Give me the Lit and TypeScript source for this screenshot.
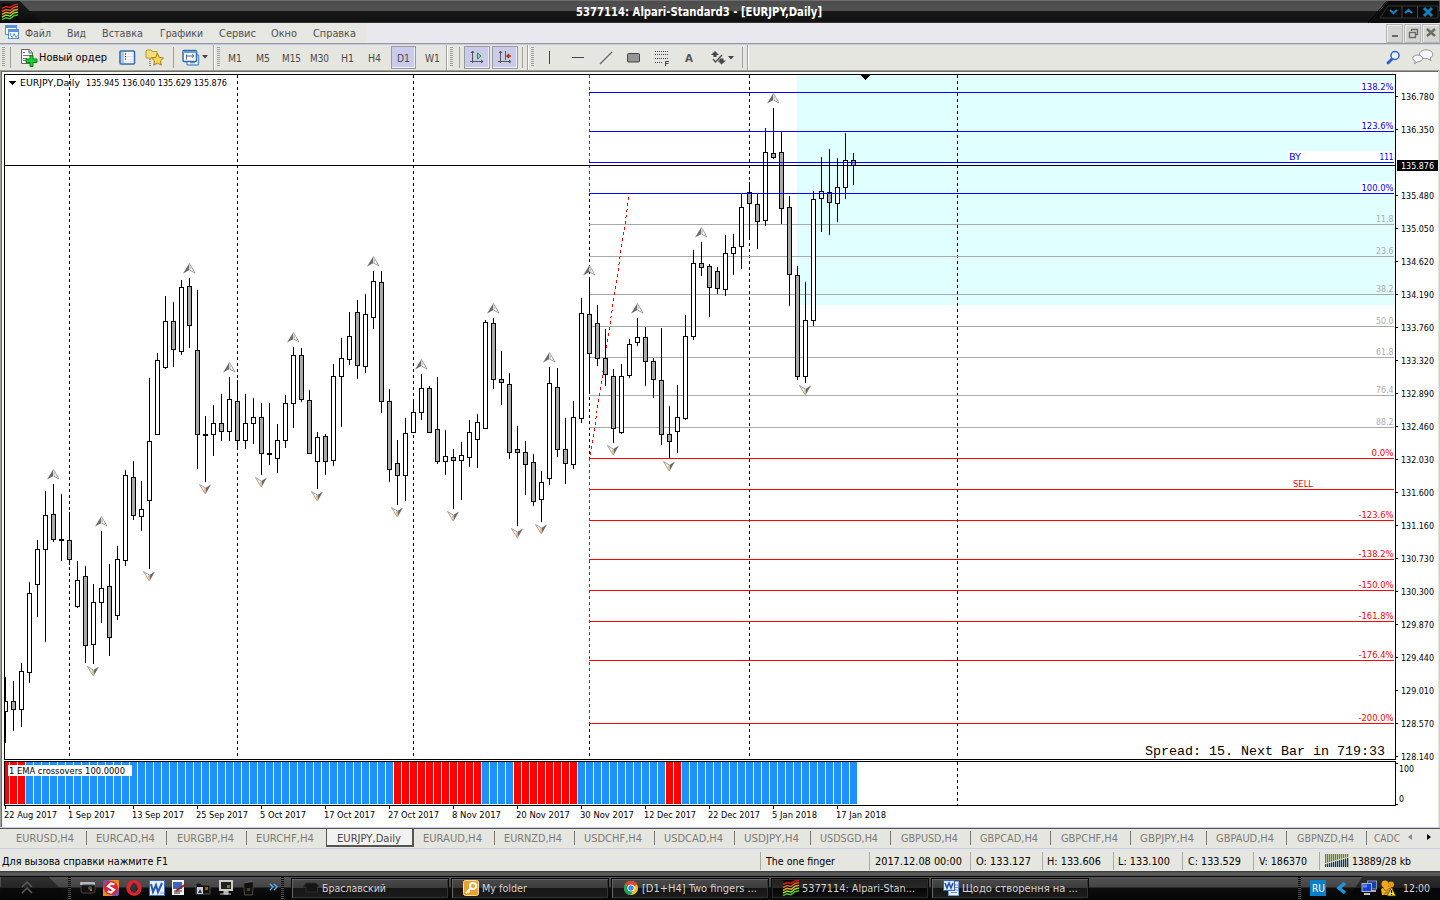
import { LitElement, html, svg, css, nothing } from 'lit';
import { customElement } from 'lit/decorators.js';

// One string per bar: high, low, body top, body bottom; g = bearish, w = bullish
const BARS = `677,743,701,712,w 681,731,701,710,g 663,727,671,710,w 582,683,593,673,w 540,617,549,585,w
491,642,515,550,w 484,542,514,540,g 494,561,539,541,g 512,565,540,560,g 561,608,580,607,w
566,663,576,646,g 584,664,602,645,w 531,623,588,603,w 564,656,586,638,g 546,620,559,616,w
470,566,475,561,w 461,520,477,516,g 481,531,509,517,w 378,569,441,501,w 353,435,360,435,w
296,369,321,368,w 302,367,321,350,g 280,355,287,352,w 278,348,286,326,g 290,469,350,435,g
416,482,434,436,g 405,456,423,435,w 394,441,423,432,g 377,441,399,432,w 380,447,401,441,g
394,449,423,441,w 398,444,417,424,w 403,475,417,454,g 403,465,453,455,g 424,473,440,459,w
395,448,403,441,w 347,428,355,404,w 348,402,355,400,g 390,454,400,454,g 432,489,437,462,w
434,475,436,462,g 364,466,376,461,w 338,427,358,377,w 312,365,336,360,w 300,379,312,366,g
294,373,314,367,w 271,329,281,318,w 271,413,282,402,g 389,482,401,470,g 440,505,463,476,g
418,501,433,476,w 399,433,412,433,w 374,420,388,413,w 386,433,388,433,g 377,464,429,462,g
430,475,456,462,w 449,509,457,461,g 442,500,455,461,w 420,467,432,458,w 414,468,422,440,w
320,429,322,429,w 318,389,323,380,g 351,405,379,383,g 373,459,384,453,g 426,526,449,453,g
441,495,452,465,g 454,506,462,502,g 471,522,482,500,w 367,485,383,479,w 368,457,387,450,g
418,484,449,464,g 401,469,417,465,w 298,423,313,419,w 278,393,314,354,g 305,366,323,359,g
329,386,358,375,g 369,443,376,429,g 364,434,376,433,w 339,378,344,376,w 318,346,337,343,w
327,386,337,362,g 358,398,361,380,g 328,445,380,435,g 406,458,434,442,g 385,453,417,432,w
315,420,336,419,w 250,340,263,337,w 242,276,263,268,g 264,317,266,288,g 267,294,271,289,g
235,296,253,290,w 234,275,247,254,w 194,269,207,247,w 182,239,192,204,g 194,249,204,222,g
128,226,152,221,w 108,159,153,158,g 132,224,152,209,g 196,306,207,275,g 266,380,275,377,g
282,383,320,377,w 191,326,199,321,w 157,232,191,199,w 149,235,192,203,g 158,222,187,204,w
133,199,160,188,w 153,185,160,166,g`.split(/\s+/).map(s => {
  const p = s.split(',');
  return { h: +p[0], l: +p[1], t: +p[2], b: +p[3], bear: p[4] === 'g' };
});

const UPS = [[53,474],[101,521],[189,268],[229,367],[293,337],[373,261],[421,364],[493,308],[549,357],[589,270],[637,308],[701,232],[773,98]];
const DOWNS = [[93,671],[149,576],[205,489],[261,482],[317,496],[397,512],[453,516],[517,533],[541,529],[613,450],[669,466],[805,390]];
const LEVELS: [number, string, string][] = [
  [92,'blue','138.2%'],[131,'blue','123.6%'],[162,'blue','111'],[193,'blue','100.0%'],
  [224,'gray','11.8'],[256,'gray','23.6'],[294,'gray','38.2'],[326,'gray','50.0'],[357,'gray','61.8'],[395,'gray','76.4'],[427,'gray','88.2'],
  [458,'red','0.0%'],[489,'red',''],[520,'red','-123.6%'],[559,'red','-138.2%'],[590,'red','-150.0%'],[621,'red','-161.8%'],[660,'red','-176.4%'],[723,'red','-200.0%'],
];
const LABEL_W: Record<string, number> = { '111': 14, '0.0%': 22 };
const PRICES = ['136.780','136.350','','135.480','135.050','134.620','134.190','133.760','133.320','132.890','132.460','132.030','131.600','131.160','130.730','130.300','129.870','129.440','129.010','128.570','128.140'];
const DATES: [string, number][] = [['22 Aug 2017',53],['1 Sep 2017',47],['13 Sep 2017',52],['25 Sep 2017',52],['5 Oct 2017',46],['17 Oct 2017',51],['27 Oct 2017',51],['8 Nov 2017',49],['20 Nov 2017',54],['30 Nov 2017',54],['12 Dec 2017',52],['22 Dec 2017',52],['5 Jan 2018',45],['17 Jan 2018',50]];

const label = (s: string, w: number, cls = '') =>
  html`<svg class="t ${cls}" width=${w} height="16"><text x="0" y="12" textLength=${w} lengthAdjust="spacingAndGlyphs">${s}</text></svg>`;

type Item = [number, number, unknown, string?];
// Lays items out in a flex row; each item is [start, width, content, class]
const row = (items: Item[]) => {
  let end = 0;
  return items.map(([x, w, c, cls]) => {
    const m = x - end;
    end = x + w;
    return html`<div class="cell ${cls ?? ''}" style="width:${w}px;margin-left:${m}px">${c}</div>`;
  });
};

const platformLogo = html`<svg width="16" height="16" viewBox="0 0 16 16"><rect width="16" height="16" fill="#060606"/>
<g fill="none" stroke-width="1.500"><path d="M0 4.500l4-2 4 1 4-2.500 4-.5" stroke="#d3201c"/><path d="M0 7.500l4-2 4 1 4-3 4-1" stroke="#e0602a"/><path d="M0 10.300l4-2 4 1 4-3 4-1" stroke="#e0b028"/><path d="M0 13l4-2 4 1 4-3 4-1" stroke="#9fd828"/><path d="M0 15.700l4-2 4 1 4-3 4-1" stroke="#4cc820"/></g></svg>`;

const I = {
  mdi: html`<svg width="16" height="16" viewBox="0 0 16 16" fill="#fff" stroke="#5b8fd8"><rect x="1.500" y=".5" width="11" height="9"/><path d="M1.500 2h11" stroke-width="2"/><rect x="4.500" y="4.500" width="10" height="9"/><path d="M4.500 6h10" stroke-width="2"/><path d="M6.500 8v2.500l2 2 1.500-4 2 4 1.500-2" fill="none"/></svg>`,
  order: html`<svg width="18" height="18" viewBox="0 0 18 18"><path d="M1.500.5h8l3 3v11h-11z" fill="#fff" stroke="#666"/><path d="M9 .5v3.500h3.500" fill="#ccc" stroke="#666"/><path d="M3 3.500h2M3 6.500h7M3 9.500h4M3 11.500h3" stroke="#777"/><path d="M9.500 6.500h3v3.500h4v3.500h-4v4h-3v-4h-4v-3.500h4z" transform="translate(.5)" fill="#1fd32a" stroke="#087a10"/></svg>`,
  panel: html`<svg width="17" height="16" viewBox="0 0 17 16"><rect x="1" y="1" width="14.500" height="13" rx="1" fill="#fff" stroke="#2f6ea8" stroke-width="1.600"/><rect x="2" y="2" width="3" height="11" fill="#a9c9ea"/><path d="M7 4h7M7 6.500h7M7 9h7M7 11.500h7" stroke="#cfd6e4" stroke-width=".8"/><path d="M6 4h1M6 6.500h1M6 9h1" stroke="#000"/></svg>`,
  fav: html`<svg width="19" height="18" viewBox="0 0 19 18"><path d="M1 2l1-1h4l1 1.500h5V9H1z" fill="#f6df74" stroke="#b39a35"/><path d="M5 10v7" stroke="#333" stroke-dasharray="1 1"/><path d="M12.500 4.500l1.900 4 4.100.5-3 2.900.8 4.300-3.800-2.100-3.800 2.100.8-4.300-3-2.900 4.100-.5z" fill="#f9d552" stroke="#a47d1c"/></svg>`,
  profiles: html`<svg width="18" height="18" viewBox="0 0 18 18"><rect x="5" y="6" width="11.500" height="10" rx="1" fill="#fff" stroke="#5f93c5" stroke-width="1.500"/><rect x="1" y="1.500" width="13.500" height="11" rx="1" fill="#f4f8fc" stroke="#2f6ea8" stroke-width="1.500"/><path d="M1 3h13.500" stroke="#6a9ccc" stroke-width="2"/><path d="M4.500 5.500v5M4.500 7h7M10 5.500L11.800 7 10 8.500M8 13.800h5" fill="none" stroke="#446f99"/></svg>`,
  caret: html`<svg width="6" height="4"><path d="M0 0h6L3 3.500z" fill="#444"/></svg>`,
  scroll: html`<svg width="16" height="16" viewBox="0 0 16 16"><path d="M3.500 2v12M1 12.500h13M2 4l1.500-2L5 4M12 11l2 1.500-2 1.500" fill="none" stroke="#555"/><path d="M8.500 4l3.500 3-3.500 3z" fill="#8be58b" stroke="#169a20"/></svg>`,
  shift: html`<svg width="16" height="16" viewBox="0 0 16 16"><path d="M3.500 2v12M1 12.500h13M2 4l1.500-2L5 4M12 11l2 1.500-2 1.500" fill="none" stroke="#555"/><path d="M8.500 2v9" stroke="#1d6aa5"/><path d="M14 7h-4M12 5l-2 2 2 2" fill="none" stroke="#a3300c" stroke-width="1.400"/></svg>`,
  vline: html`<svg width="2" height="14"><path d="M1.500 0v13" stroke="#444"/></svg>`,
  hline: html`<svg width="12" height="2"><path d="M0 1.500h12" stroke="#444"/></svg>`,
  tline: html`<svg width="14" height="14"><path d="M1 13L13 1" stroke="#666" stroke-width="1.200"/></svg>`,
  rect: html`<svg width="14" height="10"><rect x=".5" y=".5" width="12" height="8.500" rx="1" fill="#959595" stroke="#444"/></svg>`,
  fib: html`<svg width="16" height="18" viewBox="0 0 16 18"><path d="M1 2.500h14M1 5.500h14M1 9.500h14M1 13.500h8" stroke="#444" stroke-dasharray="1 1"/><path d="M11.500 17v-4.500h3.500M11.500 14.500h3" fill="none" stroke="#444"/></svg>`,
  shapes: html`<svg width="15" height="14" viewBox="0 0 15 14" fill="#484848"><path d="M4 0l4 4h-2.500V6h-3V4H0zM10.500 13.500l-4-4h2V7.500h4v2h2.500z"/><path d="M2 8l2.500 3L11 4" fill="none" stroke="#484848" stroke-width="1.200"/></svg>`,
  search: html`<svg width="15" height="15" viewBox="0 0 15 15"><path d="M2 13l4.500-4.500" stroke="#2e5bd0" stroke-width="2.800" stroke-linecap="round"/><circle cx="9" cy="5.500" r="4" fill="#e9f3ff" stroke="#2e5fcb" stroke-width="1.500"/></svg>`,
  chat: html`<svg width="22" height="16" viewBox="0 0 22 16" fill="#f7f7fa" stroke="#8f8f8f"><path d="M14 .8c3.800 0 6.700 1.900 6.700 4.500 0 1.700-1 2.900-2.700 3.700l1 2.700-3.500-2.100c-4.500.4-8-1.500-8-4.300C7.500 2.700 10.500.8 14 .8z"/><path d="M5.500 6c2.900 0 5 1.400 5 3.400s-2.200 3.400-5 3.400l-3 2 .7-2.700C1.600 11.500.8 10.500.8 9.400.8 7.400 2.700 6 5.500 6z"/></svg>`,
  cam: html`<svg width="16" height="14" viewBox="0 0 16 14"><rect x="0" y="1" width="15" height="3" rx="1" fill="#b8b8b8"/><rect x="1" y="4" width="14" height="8" rx="2" fill="#111" stroke="#444"/><circle cx="10" cy="7" r="2" fill="#455"/><rect x="10" y="8" width="2" height="2" fill="#b60"/></svg>`,
  red: html`<svg width="16" height="16" viewBox="0 0 16 16"><rect width="16" height="16" rx="2" fill="#7952a3"/><path d="M0 9l7-9h9v8l-7 8H0z" fill="#e98b2b"/><circle cx="8" cy="8" r="7" fill="#dc2238"/><path d="M11.500 4.500L8 3.500 5 6.200l6 3.500-3 2.800-3.500-1.200" fill="none" stroke="#fff" stroke-width="2.200"/></svg>`,
  opera: html`<svg width="16" height="16" viewBox="0 0 16 16"><ellipse cx="8" cy="8" rx="5.700" ry="5.900" fill="none" stroke="#e02230" stroke-width="4"/><ellipse cx="8" cy="8" rx="3" ry="5" fill="#333"/></svg>`,
  word: html`<svg width="16" height="16" viewBox="0 0 16 16"><rect x=".5" y=".5" width="15" height="15" fill="#e6effc" stroke="#3e6dc0"/><path d="M2 4l2 8 3-7 2 7 4-9" fill="none" stroke="#2857b0" stroke-width="2"/><path d="M11 13h4" stroke="#7da0dd"/></svg>`,
  note: html`<svg width="16" height="16" viewBox="0 0 16 16"><rect x="1" y="0" width="12" height="15" fill="#f4f6fb"/><rect x="2" y="2" width="9" height="7" fill="#3b66b8"/><path d="M3 11h8M3 13h6" stroke="#222"/><path d="M5 11L15 4" stroke="#922" stroke-width="2"/></svg>`,
  folder: html`<svg width="16" height="16" viewBox="0 0 16 16"><path d="M1 3h5l1 2h8v9H1z" fill="#111" stroke="#555"/><rect x="2" y="7" width="6" height="7" fill="#ccd"/><path d="M3 13l2-4 2 4z" fill="#234"/><rect x="10" y="7" width="3" height="3" fill="#8a6a10"/></svg>`,
  pc: html`<svg width="16" height="16" viewBox="0 0 16 16"><rect x="2" y="1" width="12" height="9" fill="#222" stroke="#e0e0d8" stroke-width="1.800"/><rect x="9" y="5" width="3" height="3" fill="#6b8a20"/><path d="M6 11h4v3H6zM2 14h11" fill="#aaa" stroke="#ccc"/></svg>`,
  bin: html`<svg width="14" height="16" viewBox="0 0 14 16"><path d="M1.500 2h10l-1 13h-8z" fill="#101010" stroke="#4a4a4a"/><path d="M2 3l8-2" stroke="#666"/><rect x="5" y="8" width="3" height="3" fill="#574812"/></svg>`,
  key: html`<svg width="16" height="16" viewBox="0 0 16 16"><rect x=".5" y=".5" width="15" height="15" rx="2" fill="#e8a12a" stroke="#f7dc9a"/><circle cx="10" cy="6" r="3" fill="none" stroke="#fff" stroke-width="2"/><path d="M8 8l-5 5M5 11l1.500 1.500" stroke="#fff" stroke-width="2"/></svg>`,
  chrome: html`<svg width="16" height="16" viewBox="0 0 16 16"><circle cx="8" cy="8" r="7" fill="#f5c51d"/><path d="M8 8L1.900 4.500A7 7 0 0 1 14 4.500z" fill="#dd4433"/><path d="M8 8L1.900 4.500A7 7 0 0 0 7.600 15L11 9.700z" fill="#1aa15f"/><circle cx="8" cy="8" r="3.600" fill="#fff"/><circle cx="8" cy="8" r="2.700" fill="#4587f3"/></svg>`,
  wdoc: html`<svg width="16" height="16" viewBox="0 0 16 16"><rect x="5.500" y="1.500" width="10" height="14" fill="#eef4ff" stroke="#7c9ed8"/><path d="M11 5h4M11 7.500h4M11 10h4M8 12.500h6" stroke="#6c8dca"/><rect x=".5" y=".5" width="11" height="10" fill="#dce8fb" stroke="#3563b4"/><path d="M2 3l2 5 2-5 2 5 2-5" fill="none" stroke="#234fa5" stroke-width="1.500"/></svg>`,
  chip: html`<svg width="16" height="12" viewBox="0 0 16 12"><path d="M3 1h10l3 3-2 1 1 5H3V5H0z" fill="#151515" stroke="#2e2e2e"/></svg>`,
  net: html`<svg width="17" height="16" viewBox="0 0 17 16"><rect x="6.500" y="1" width="9" height="8" fill="#1b3fa5" stroke="#8794ae"/><path d="M10 11h5" stroke="#aaa" stroke-width="2"/><rect x="1" y="3.500" width="9.500" height="8" fill="#1740d0" stroke="#aeb9cd"/><path d="M2 4.500h4v3H2z" fill="#5c8af5"/><path d="M3 14h6" stroke="#c5c5c5" stroke-width="2"/></svg>`,
  people: html`<svg width="17" height="17" viewBox="0 0 17 17"><circle cx="5" cy="4" r="3.500" fill="#f0a71c"/><circle cx="11" cy="4.500" r="3" fill="#e59a18"/><path d="M1 9l5-3 6 1 2 8H2z" fill="#f2ae20"/><path d="M3 8l3 3 4-3M4 14l4-2" stroke="#9a5e07" fill="none"/><path d="M11.500 7l4.500 9H7z" fill="#fbe237" stroke="#2b2600" stroke-width=".8"/><path d="M11.500 10v3M11.500 14v1" stroke="#000" stroke-width="1.300"/></svg>`,
};

@customElement('price-chart')
class PriceChart extends LitElement {
  static styles = css`
    :host { display: block; width: 1440px; height: 757px; }
    svg { display: block; }
    text { font-family: 'DejaVu Sans Condensed', 'DejaVu Sans', sans-serif; font-stretch: condensed; font-size: 9.5px; fill: #000; }
    .blue { stroke: #00f; } .red { stroke: #f00; } .gray { stroke: #a9a9a9; } .black { stroke: #000; }
    text.blue { fill: #00f; stroke: none; } text.red { fill: #f00; stroke: none; } text.gray { fill: #b0acac; stroke: none; }
    .inv { fill: #fff; }
    .mono { font-family: 'Liberation Mono', monospace; font-size: 13.3px; }
    .dash { stroke-dasharray: 3 3; }
    .crisp { shape-rendering: crispEdges; }
  `;

  txt(s: string, x: number, y: number, w: number, cls = '') {
    return svg`<text class=${cls} x=${x} y=${y} textLength=${w} lengthAdjust="spacingAndGlyphs">${s}</text>`;
  }

  line(l: [number, string, string]) {
    return svg`<path class=${l[1]} d="M589 ${l[0] + 0.5}H1394"/>`;
  }

  vert(x: number, a: number, b: number, cls = 'black') {
    return svg`<path class="dash ${cls}" d="M${x + 0.5} ${a}V${b}"/>`;
  }

  render() {
    const emaRed = (k: number) => k < 3 || (k > 48 && k < 60) || (k > 63 && k < 72) || k === 83 || k === 84;
    return html`<svg width="1440" height="757" viewBox="0 70 1440 757">
      <rect x="0" y="70" width="1440" height="757" fill="#fff"/>
      <g class="crisp">
        <rect x="0" y="70" width="1440" height="1" fill="#a0a09a"/><rect x="0" y="71" width="1438" height="1" fill="#6c6c64"/>
        <rect x="0" y="70" width="1" height="757" fill="#a0a09a"/><rect x="1" y="71" width="1" height="756" fill="#6c6c64"/>
        <rect x="1438" y="71" width="1" height="756" fill="#e6e6e0"/><rect x="1439" y="70" width="1" height="757" fill="#ccccea"/>
        <rect x="797" y="75" width="598" height="230" fill="#e0ffff"/>
        <g fill="none">
          ${[69, 237, 413, 749, 957].map(x => [this.vert(x, 75, 759), x === 957 ? this.vert(x, 762, 805) : nothing])}
          ${this.vert(589, 75, 193, 'red')}${this.vert(589, 193, 458)}${this.vert(589, 458, 723, 'red')}${this.vert(589, 723, 759)}
          ${LEVELS.filter(l => l[1] !== 'blue').map(l => this.line(l))}
        </g>
      </g>
      <path class="red dash crisp" fill="none" d="M590.500 455L629.500 193.500"/>
      <g class="crisp">
        ${BARS.map((c, i) => {
          const x = 5 + 8 * i;
          const left = i ? x - 2 : x;
          const w = i ? 5 : 3;
          return svg`<rect x=${x} y=${c.h} width="1" height=${c.l - c.h}/><rect x=${left} y=${c.t} width=${w} height=${c.b - c.t}/>
            ${c.b - c.t > 2 ? svg`<rect x=${left + (i ? 1 : 0)} y=${c.t + 1} width=${i ? 3 : 2} height=${c.b - c.t - 2} fill=${c.bear ? '#a9a9a9' : '#fff'}/>` : nothing}`;
        })}
        <path class="black" d="M5 165.500H1395"/>
        <g fill="none" class="black"><rect x="4.500" y="74.500" width="1391" height="685"/><rect x="4.500" y="761.500" width="1391" height="44"/></g>
        ${BARS.map((_, k) => svg`<rect x=${k ? 2 + 8 * k : 5} y="762" width=${k ? 7 : 4} height="42" fill=${emaRed(k) ? '#f00' : '#1e90ff'}/>`)}
        <rect x="8" y="765" width="124" height="11" fill="#fff"/>
        ${[81, 120, 182].map(y => svg`<rect x="1360" y=${y} width="34" height="11" fill="#fff"/>`)}
        <rect x="1288" y="151" width="106" height="11" fill="#fff"/>
        <g fill="none">${LEVELS.filter(l => l[1] === 'blue').map(l => this.line(l))}</g>
        ${PRICES.map((p, i) => p ? svg`<rect x="1396" y=${96 + 33 * i} width="2" height="1"/>` : nothing)}
        <rect x="1396" y="763" width="2" height="1"/><rect x="1396" y="804" width="2" height="1"/>
        ${DATES.map((_, i) => svg`<rect x=${5 + 64 * i} y="806" width="1" height="3"/>`)}
        <rect x="1397" y="160" width="41" height="11"/>
        <path d="M860 75h11l-5.500 5z"/>
        <path d="M8 81h8l-4 4z"/>
      </g>
      ${UPS.map(([x, y]) => svg`<path d="M${x + 0.5} ${y - 5}L${x - 6} ${y + 5.5}L${x + 0.5} ${y + 2}z" fill="#6e6a68"/><path d="M${x + 0.5} ${y - 4.5}L${x + 6} ${y + 5}L${x + 0.5} ${y + 2}" fill="#fff" stroke="#8a8480" stroke-width=".8"/><path d="M${x + 1.3} ${y - 2}v4" stroke="#a8cbe2"/>`)}
      ${DOWNS.map(([x, y]) => svg`<path d="M${x + 0.3} ${y + 5.5}L${x + 6} ${y - 4.5}L${x + 0.3} ${y - 1}z" fill="#6e6a68"/><path d="M${x + 0.3} ${y + 5}L${x - 5.5} ${y - 4.5}L${x + 0.3} ${y - 1}" fill="#fff" stroke="#8a8480" stroke-width=".8"/><path d="M${x - 0.5} ${y - 1}v4" stroke="#ecc796"/>`)}
      ${LEVELS.map(([y, c, s]) => {
        if (!s) return nothing;
        const w = LABEL_W[s] ?? (s[0] === '-' ? 35 : s.length === 6 ? 32 : 17.5);
        return this.txt(s, 1393.5 - w, y - 2, w, c);
      })}
      ${this.txt('BY', 1289, 160, 12, 'blue')}${this.txt('SELL', 1293, 487, 20, 'red')}
      ${PRICES.map((p, i) => p ? this.txt(p, 1401, 100 + 33 * i, 33, '') : nothing)}
      ${this.txt('135.876', 1401, 169, 33, 'inv')}
      ${this.txt('100', 1399, 772, 15)}${this.txt('0', 1399, 802, 5)}
      ${this.txt('EURJPY,Daily', 20, 86, 60)}${this.txt('135.945 136.040 135.629 135.876', 86, 86, 141)}
      ${this.txt('1 EMA crossovers 100.0000', 9, 774, 116)}
      ${DATES.map(([d, w], i) => this.txt(d, 4 + 64 * i, 818, w))}
      ${this.txt('Spread: 15. Next Bar in 719:33', 1145, 755, 240, 'mono')}
    </svg>`;
  }
}

@customElement('app-root')
class AppRoot extends LitElement {
  static styles = css`
    :host { display: flex; flex-direction: column; width: 1440px; height: 900px; overflow: hidden; background: #e6e6e0;
      font-family: 'DejaVu Sans Condensed', 'DejaVu Sans', sans-serif; font-stretch: condensed; font-size: 11px; color: #000; }
    * { box-sizing: border-box; }
    svg { display: block; flex: none; overflow: visible; }
    .t { fill: currentColor; }
    .row { display: flex; align-items: center; flex: none; }
    .cell { display: flex; align-items: center; justify-content: center; flex: none; }
    .title { height: 23px; padding-top: 1px; background: linear-gradient(#6e6e6e 0 1px, #4d4d4d 1px, #525252 11px, #1a1a1a 11px, #101010 22px, #333 22px); color: #fff; }
    .title .t { font-weight: bold; font-size: 11.5px; }
    .corner { height: 22px; justify-content: flex-start; padding-left: 2px; background: linear-gradient(#1d1d1d, #0c0c0c); clip-path: polygon(0 0, 20px 0, 41px 100%, 0 100%); }
    .menu { height: 20px; color: #505050; background: linear-gradient(90deg, #e6e6e2 0 366px, #e8e8ee 367px); }
    .win { height: 19px; border: 1px solid #b4b4b0; background: #d4d4d0; box-shadow: inset 1px 1px #eee; }
    .tools { height: 27px; border-top: 1px solid #999; box-shadow: inset 0 1px #c8c8ea; background: #e6e6e0; }
    .tools .tf { font-size: 10px; color: #4a4a4a; }
    .low { padding-top: 1px; }
    .glyph { color: #555; font-weight: bold; padding-top: 2px; }
    .grip { height: 20px; background: repeating-linear-gradient(#a0a09c 0 1px, transparent 1px 2px); }
    .sep { height: 21px; background: #a0a09c; }
    .edge { height: 25px; background: #a0a09c; box-shadow: 1px 0 #fff; }
    .on { height: 23px; background: #cacaea; border: 1px solid #9a9a9c; box-shadow: inset -1px -1px #eef; }
    .tabs { height: 22px; align-items: stretch; border-top: 1px solid #ccccea; border-bottom: 1px solid #ccccea; background: linear-gradient(#55554f 0 1px, #e6e6e0 1px); color: #7c7a72; }
    .tab { padding: 0 4px 1px 0; }
    .bar { background: linear-gradient(#7c7a72, #7c7a72) right 3px / 1px 14px no-repeat; }
    .active { height: 19px; padding: 2px 2px 0 0; background: #f2f2f2; color: #484848; border: 1px solid #55554f; border-right-width: 2px; border-bottom-width: 2px; }
    .status { height: 22px; padding-top: 2px; background: #e6e6e0; }
    .ssep { height: 18px; background: #a9a9a4; }
    .task { flex: 1; padding-top: 5px; color: #d4d4d4; background: linear-gradient(#3e3e3e 0 1px, #606060 2px, #505050 5px, #0a0a0a 5px 6px, #535353 6px, #454545 16px, #0e0e0e 17px, #050505); }
    .btn { height: 21px; justify-content: flex-start; gap: 3px; padding-left: 11px; border: 1px solid #090909; box-shadow: inset 1px 1px #666, inset -1px -1px #333; background: linear-gradient(#4b4b4b, #3a3a3a 49%, #161616 50%, #1c1c1c); }
    .press { background: linear-gradient(#1f1f1f, #2a2a2a 49%, #060606 50%, #111); box-shadow: inset 0 0 0 1px #2c2c2c; }
    .dots { height: 22px; background: repeating-linear-gradient(#000 0 1px, #555 1px 2px); }
    .start { height: 22px; padding-right: 10px; background: linear-gradient(#303030, #242424 50%, #0a0a0a 51%, #080808); clip-path: polygon(0 0, 78% 0, 100% 60%, 100% 100%, 0 100%); }
    .ru { height: 16px; background: #0c7fc9; color: #fff; }
    .tray { height: 24px; justify-content: flex-start; background: linear-gradient(#2e2e2e, #222 49%, #060606 50%, #080808); clip-path: polygon(16px 0, 100% 0, 100% 100%, 0 100%); }
  `;

  render() {
    const ctl = html`<svg width="78" height="22" viewBox="0 0 78 22"><path d="M26 0H77V22H8z" fill="#0c0c0c"/><path d="M25 0L6 22" stroke="#000"/><path d="M26 5H76V17H18z" fill="#0a0a0a" stroke="#353535"/><path d="M40 5V17M55.500 5V17" stroke="#444"/><g fill="none" stroke="#1580bf" stroke-width="2.200"><path d="M28 9l3.500 3 3.500-3M43 12l3.500-3 3.500 3"/><path d="M62 7l8 8M70 7l-8 8" stroke-width="3"/></g></svg>`;
    const tabNames: [string, number, number][] = [['EURUSD,H4',81,58],['EURCAD,H4',80,59],['EURGBP,H4',80,57],['EURCHF,H4',79,58],['EURJPY,Daily',88,64],['EURAUD,H4',81,59],['EURNZD,H4',80,58],['USDCHF,H4',80,58],['USDCAD,H4',80,59],['USDJPY,H4',76,55],['USDSGD,H4',80,58],['GBPUSD,H4',80,57],['GBPCAD,H4',80,58],['GBPCHF,H4',80,57],['GBPJPY,H4',76,54],['GBPAUD,H4',80,58],['GBPNZD,H4',80,57]];
    let x = 6;
    const tabs: Item[] = tabNames.map(([n, w, tw]) => {
      const it: Item = [x, w, label(n, tw), n.includes('Daily') ? 'tab active' : n === 'EURCHF,H4' ? 'tab' : 'tab bar'];
      x += w;
      return it;
    });
    const winIcon = (d: string, w = 2) => html`<svg width="12" height="12"><path d=${d} fill="none" stroke="#6a6a66" stroke-width=${w}/></svg>`;
    const ssep = (p: number): Item => [p, 1, '', 'ssep'];
    return html`
      <div class="row title">${row([
        [0, 42, platformLogo, 'corner'],
        [576, 246, label('5377114: Alpari-Standard3 - [EURJPY,Daily]', 246)],
        [1362, 78, ctl],
      ])}</div>
      <div class="row menu">${row([
        [4, 16, I.mdi], [25, 26, label('Файл', 26)], [67, 19, label('Вид', 19)], [102, 41, label('Вставка', 41)],
        [160, 43, label('Графики', 43)], [219, 37, label('Сервис', 37)], [271, 26, label('Окно', 26)], [313, 43, label('Справка', 43)],
        [1386, 17, winIcon('M3 9h6'), 'win'], [1404, 17, winIcon('M4.500 4V2.500h6v5H9M2.500 5.500h6v5h-6z', 1.4), 'win'], [1422, 18, winIcon('M2 2l8 7M10 2l-8 7', 2.4), 'win'],
      ])}</div>
      <div class="row tools">${row([
        [2, 3, '', 'grip'], [10, 1, '', 'sep'], [20, 18, I.order, 'low'], [39, 68, label('Новый ордер', 68)],
        [119, 17, I.panel, 'low'], [145, 19, I.fav, 'low'], [173, 1, '', 'sep'], [182, 18, I.profiles, 'low'], [202, 6, I.caret], [213, 1, '', 'edge'],
        [217, 3, '', 'grip'], [228, 14, label('M1', 14, 'tf'), 'low'], [256, 14, label('M5', 14, 'tf'), 'low'], [282, 19, label('M15', 19, 'tf'), 'low'],
        [310, 19, label('M30', 19, 'tf'), 'low'], [341, 13, label('H1', 13, 'tf'), 'low'], [368, 13, label('H4', 13, 'tf'), 'low'],
        [391, 25, label('D1', 13, 'tf'), 'on low'], [425, 15, label('W1', 15, 'tf'), 'low'], [446, 1, '', 'edge'], [450, 3, '', 'grip'],
        [459, 1, '', 'sep'], [464, 26, I.scroll, 'on'], [492, 26, I.shift, 'on'], [522, 1, '', 'sep'], [527, 1, '', 'edge'], [531, 3, '', 'grip'],
        [548, 2, I.vline, 'low'], [572, 12, I.hline], [599, 14, I.tline, 'low'], [627, 14, I.rect, 'low'], [654, 16, I.fib, 'low'],
        [685, 8, label('A', 8), 'glyph'], [711, 15, I.shapes, 'low'], [728, 6, I.caret, 'low'], [742, 1, '', 'sep'], [747, 1, '', 'edge'],
        [1386, 15, I.search], [1412, 22, I.chat],
      ])}</div>
      <price-chart></price-chart>
      <div class="row tabs">${row([
        ...tabs,
        [1376, 26, label('CADC', 26), 'tab'],
        [1407, 9, html`<svg width="4" height="7"><path d="M4 0v6L0 3z" fill="#888"/></svg>`, 'tab'],
        [1426, 9, html`<svg width="4" height="7"><path d="M0 0v6l4-3z" fill="#000"/></svg>`, 'tab'],
      ])}</div>
      <div class="row status">${row([
        [2, 166, label('Для вызова справки нажмите F1', 166)],
        ssep(760), [766, 69, label('The one finger', 69)], ssep(869), [875, 87, label('2017.12.08 00:00', 87)],
        ssep(970), [976, 55, label('O: 133.127', 55)], ssep(1042), [1047, 54, label('H: 133.606', 54)],
        ssep(1113), [1118, 52, label('L: 133.100', 52)], ssep(1182), [1188, 53, label('C: 133.529', 53)],
        ssep(1253), [1259, 48, label('V: 186370', 48)], ssep(1319),
        [1325, 24, html`<svg width="24" height="14">${Array.from({ length: 12 }, (_, i) => svg`<rect x=${i * 2} y="0" width="1.300" height=${9 - i * 0.55} fill="#6b7f1c"/><rect x=${i * 2} y=${10 - i * 0.55} width="1.300" height=${3 + i * 0.55} fill="#0d3c60"/>`)}</svg>`],
        [1352, 59, label('13889/28 kb', 59)],
      ])}</div>
      <div class="row task">${row([
        [1, 61, html`<svg width="12" height="14"><path d="M1 6l5-5 5 5M1 12l5-5 5 5" fill="none" stroke="#5c5c5c" stroke-width="1.500"/></svg>`, 'start'],
        [68, 3, '', 'dots'], [80, 16, I.cam], [103, 16, I.red], [126, 16, I.opera], [149, 16, I.word], [171, 16, I.note],
        [195, 16, I.folder], [218, 16, I.pc], [242, 14, I.bin],
        [269, 8, html`<svg width="9" height="8"><path d="M1 0l3 3-3 3M5 0l3 3-3 3" fill="none" stroke="#58aef5" stroke-width="1.400"/></svg>`],
        [281, 3, '', 'dots'],
        [291, 158, html`${I.chip}${label('Браславский', 64)}`, 'btn'],
        [451, 158, html`${I.key}${label('My folder', 45)}`, 'btn'],
        [611, 158, html`${I.chrome}${label('[D1+H4] Two fingers ...', 115)}`, 'btn'],
        [771, 158, html`${platformLogo}${label('5377114: Alpari-Stan...', 113)}`, 'btn press'],
        [931, 158, html`${I.wdoc}${label('Щодо створення на ...', 116)}`, 'btn'],
        [1298, 3, '', 'dots'], [1310, 16, label('RU', 13), 'ru'],
        [1335, 12, html`<svg width="12" height="12"><path d="M10 1L4 6l6 5" fill="none" stroke="#1f94dc" stroke-width="3.500"/></svg>`],
        [1347, 93, row([[14, 17, I.net], [33, 17, I.people], [56, 27, label('12:00', 27)]]), 'tray'],
      ])}</div>
    `;
  }
}
